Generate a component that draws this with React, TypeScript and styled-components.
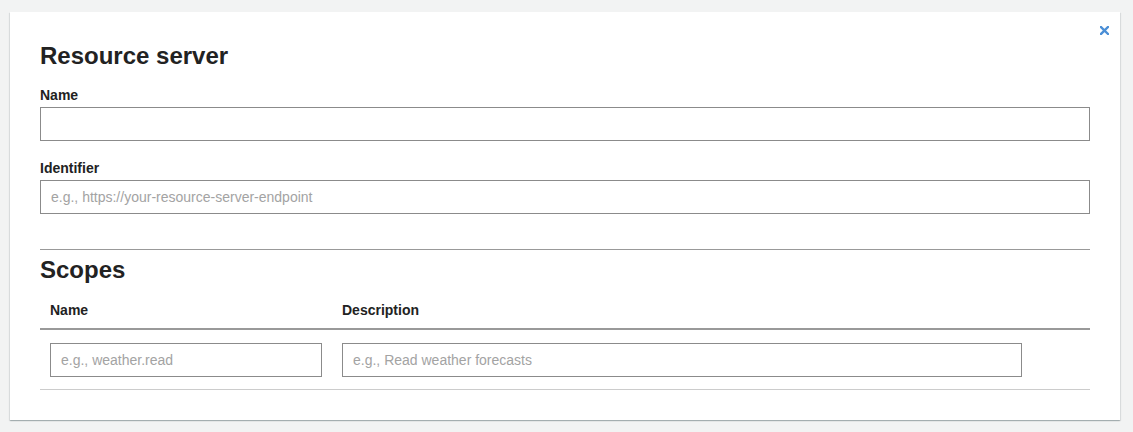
import React from "react";
import styled, { createGlobalStyle } from "styled-components";

const GlobalStyle = createGlobalStyle`
  html, body {
    margin: 0;
    padding: 0;
    background: #f2f3f3;
    font-family: "Liberation Sans", Arial, Helvetica, sans-serif;
    color: #222222;
  }
  * { box-sizing: border-box; }
`;

const Page = styled.div`
  padding: 12px 13px 12px 10px;
`;

const Card = styled.section`
  position: relative;
  background: #ffffff;
  padding: 29px 30px 30px 30px;
  box-shadow: 0 1px 1px 0 rgba(0, 28, 36, 0.2), 1px 1px 1px 0 rgba(0, 28, 36, 0.08),
    -1px 1px 1px 0 rgba(0, 28, 36, 0.08);
`;

const CloseButton = styled.button`
  position: absolute;
  top: 13px;
  right: 11px;
  width: 10px;
  height: 10px;
  padding: 0;
  border: none;
  background: transparent;
  display: flex;
  align-items: center;
  justify-content: center;
  cursor: pointer;
`;

const Heading = styled.h2<{ $gap: number }>`
  margin: 0 0 ${(p) => p.$gap}px 0;
  font-size: 24px;
  line-height: 30px;
  font-weight: 700;
  color: #222222;
`;

const Field = styled.div<{ $top: number }>`
  display: flex;
  flex-direction: column;
  gap: 2px;
  margin-top: ${(p) => p.$top}px;
`;

const Label = styled.label`
  font-size: 14px;
  line-height: 20px;
  font-weight: 700;
  color: #222222;
`;

const TextInput = styled.input`
  display: block;
  width: 100%;
  height: 34px;
  margin: 0;
  padding: 0 10px;
  border: 1px solid #8b8b8b;
  border-radius: 0;
  background: #fff;
  font-family: "Liberation Sans", Arial, Helvetica, sans-serif;
  font-size: 14px;
  color: #222222;
  outline: none;
  &::placeholder {
    color: #a3a3a3;
  }
`;

const Divider = styled.hr`
  margin: 35px 0 5px 0;
  border: none;
  border-top: 1px solid #999999;
  height: 0;
`;

const ScopeGrid = styled.div`
  display: grid;
  grid-template-columns: 292px 700px 1fr;
`;

const HeadCell = styled.div`
  padding: 0 10px 8px 10px;
  font-size: 14px;
  line-height: 20px;
  font-weight: 700;
  color: #222222;
  border-bottom: 2px solid #999999;
`;

const BodyCell = styled.div`
  padding: 13px 10px 12px 10px;
  border-bottom: 1px solid #cccccc;
`;

const CloseIcon = () => (
  <svg width="9" height="9" viewBox="0 0 9 9" aria-hidden="true">
    <path d="M1 1 L8 8 M8 1 L1 8" stroke="#4b8fd6" strokeWidth="2.4" strokeLinecap="square" />
  </svg>
);

export default function App() {
  return (
    <>
      <GlobalStyle />
      <Page>
        <Card>
          <CloseButton aria-label="Close">
            <CloseIcon />
          </CloseButton>
          <Heading $gap={14}>Resource server</Heading>
          <Field $top={0}>
            <Label>Name</Label>
            <TextInput type="text" />
          </Field>
          <Field $top={17}>
            <Label>Identifier</Label>
            <TextInput type="text" placeholder="e.g., https://your-resource-server-endpoint" />
          </Field>
          <Divider />
          <Heading $gap={15}>Scopes</Heading>
          <ScopeGrid>
            <HeadCell>Name</HeadCell>
            <HeadCell>Description</HeadCell>
            <HeadCell />
            <BodyCell>
              <TextInput type="text" placeholder="e.g., weather.read" />
            </BodyCell>
            <BodyCell>
              <TextInput type="text" placeholder="e.g., Read weather forecasts" />
            </BodyCell>
            <BodyCell />
          </ScopeGrid>
        </Card>
      </Page>
    </>
  );
}
